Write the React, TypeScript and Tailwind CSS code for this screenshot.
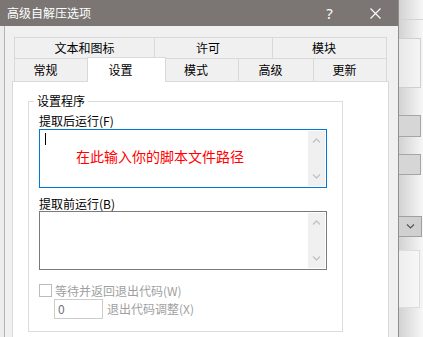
function Chevron({ up }: { up?: boolean }) {
  return (
    <svg width="9" height="5" viewBox="0 0 9 5" fill="none" stroke="#c3c3c3" strokeWidth={1.3}>
      <path d={up ? "M1 4.5 4.5 1 8 4.5" : "M1 0.5 4.5 4 8 0.5"} />
    </svg>
  );
}

function ScrollBar() {
  return (
    <div className="flex w-[17px] flex-col items-center justify-between bg-[#f0f0f0] py-[7px]">
      <Chevron up />
      <Chevron />
    </div>
  );
}

const topTabs = [
  { label: "文本和图标", cls: "w-[140px]" },
  { label: "许可", cls: "w-[118px] pr-[11px]" },
  { label: "模块", cls: "w-[115px] border-r pr-[11px]" },
];

const bottomTabs = [
  { label: "常规", cls: "w-[73px] border-l pr-[11px]" },
  { label: "设置", cls: "w-[79px] border-x pr-[12px]", active: true },
  { label: "模式", cls: "w-[72px] pr-[12px]" },
  { label: "高级", cls: "w-[75px] border-l pr-[11px]" },
  { label: "更新", cls: "w-[74px] border-x pr-[11px]" },
];

export default function App() {
  return (
    <div className="flex h-[337px] w-[423px] overflow-hidden bg-[#f0f0f0] font-['Noto_Sans_CJK_SC',sans-serif] text-[12px] leading-[14px] text-black">
      {/* dialog */}
      <div className="flex w-[398px] flex-col">
        <div className="flex h-[26px] shrink-0 items-center bg-[#7b7674] pl-[7px] text-white">
          <span className="leading-[26px]">高级自解压选项</span>
          <span className="ml-auto flex w-[45px] justify-center font-['Noto_Sans',sans-serif] text-[15px] leading-[26px]">?</span>
          <span className="flex w-[46px] justify-center">
            <svg width="11" height="11" viewBox="0 0 11 11" stroke="#ffffff" strokeWidth={1.1}>
              <path d="M0.5 0.5 10.5 10.5M10.5 0.5 0.5 10.5" />
            </svg>
          </span>
        </div>

        <div className="flex flex-1">
          <div className="w-[4px] bg-[#ececec]" />
          <div className="w-px bg-[#b4b4b4]" />
          <div className="flex flex-1 flex-col pl-[7px] pt-[11px]">
            {/* tabs */}
            <div className="ml-[2px] w-[373px]">
              <div className="flex h-[21px]">
                {topTabs.map((t) => (
                  <div key={t.label} className={`flex h-[21px] items-center justify-center border-l border-t border-[#d9d9d9] ${t.cls}`}>
                    {t.label}
                  </div>
                ))}
              </div>
              <div className="flex h-[23px] items-start">
                {bottomTabs.map((t) =>
                  t.active ? (
                    <div key={t.label} className={`relative z-10 -mt-px flex h-[25px] items-center justify-center border-t border-[#d9d9d9] bg-white pb-[1px] ${t.cls}`}>
                      {t.label}
                    </div>
                  ) : (
                    <div key={t.label} className={`flex h-[23px] items-center justify-center border-t border-[#d9d9d9] ${t.cls}`}>
                      {t.label}
                    </div>
                  )
                )}
              </div>
            </div>

            {/* panel */}
            <div className="w-[377px] flex-1 border border-b-0 border-[#d9d9d9] bg-white">
              <div className="relative ml-[15px] mt-[19px] h-[231px] w-[315px] border border-[#dcdcdc]">
                <span className="absolute left-[5px] top-[-8px] bg-white px-[3px]">设置程序</span>
                <div className="pl-[10px]">
                  <div className="mt-[12px]">提取后运行(F)</div>
                  <div className="mt-px flex h-[59px] w-[288px] border border-[#0078d7] p-px">
                    <div className="flex-1">
                      <div className="ml-[4px] mt-[2px] h-[12px] w-px bg-black" />
                      <div className="ml-[35px] mt-[3px] text-[14px] leading-[16px] text-[#ff0000]">在此输入你的脚本文件路径</div>
                    </div>
                    <ScrollBar />
                  </div>

                  <div className="mt-[9px]">提取前运行(B)</div>
                  <div className="flex h-[59px] w-[288px] border border-[#7a7a7a] p-px">
                    <div className="flex-1" />
                    <ScrollBar />
                  </div>

                  <div className="mt-[14px] flex h-[13px] items-center gap-[3px]">
                    <div className="h-[13px] w-[13px] border border-[#bcbcbc] bg-white" />
                    <span className="text-[#a0a0a0]">等待并返回退出代码(W)</span>
                  </div>
                  <div className="ml-[15px] mt-[2px] flex items-center gap-[4px]">
                    <div className="h-[20px] w-[49px] border border-[#cccccc] pl-[3px] leading-[18px] text-[#707080]">0</div>
                    <span className="text-[#a0a0a0]">退出代码调整(X)</span>
                  </div>
                </div>
              </div>
            </div>
          </div>
        </div>
      </div>

      {/* edge of dialog */}
      <div className="w-px bg-[#8f8f8f]" />

      {/* window underneath */}
      <div className="flex w-[24px] flex-col bg-gradient-to-r from-[#d2d2d2] to-[#f7f7f7]">
        <div className="mt-[19px] h-px bg-[#d4d4d4]" />
        <div className="mt-[18px] h-[50px] w-[22px] border-y border-r border-[#cfcfcf] bg-[#f6f6f6]/60" />
        <div className="mt-[27px] h-[22px] w-[22px] border-y border-r border-[#a6a6a6] bg-[#d6d6d6]" />
        <div className="mt-[17px] h-[21px] w-[22px] border-y border-r border-[#a6a6a6] bg-[#d6d6d6]" />
        <div className="mt-[41px] flex h-[21px] w-[23px] items-center justify-end border-y border-r border-[#a0a0a0] bg-[#d0d0d0] pr-[6px]">
          <svg width="9" height="5" viewBox="0 0 9 5" fill="none" stroke="#555555" strokeWidth={1.2}>
            <path d="M1 0.5 4.5 4 8 0.5" />
          </svg>
        </div>
        <div className="mt-[13px] h-[58px] w-[21px] border-y border-r border-[#dcdcdc] bg-[#fafafa]/70" />
      </div>
    </div>
  );
}
